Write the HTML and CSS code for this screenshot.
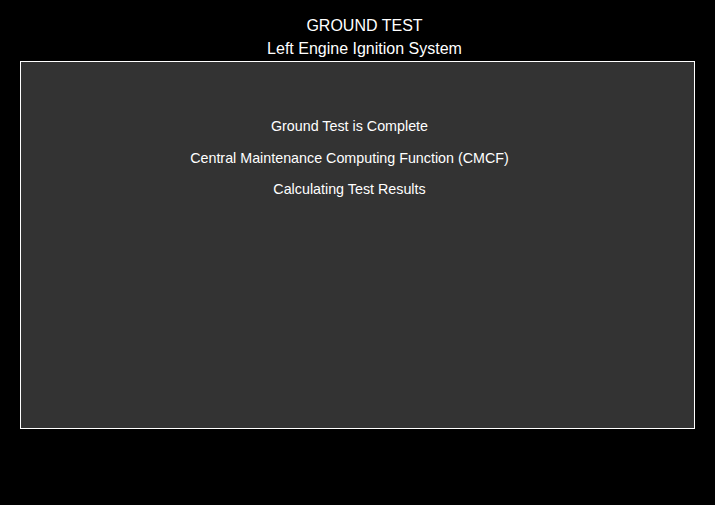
FILE: index.html
```html
<!DOCTYPE html>
<html>
<head>
<meta charset="utf-8">
<link rel="stylesheet" href="styles.css">
</head>
<body>
<div class="header">
  <div class="title">GROUND TEST</div>
  <div class="subtitle">Left Engine Ignition System</div>
</div>
<div class="panel">
  <div class="messages">
    <div class="msg">Ground Test is Complete</div>
    <div class="msg">Central Maintenance Computing Function (CMCF)</div>
    <div class="msg">Calculating Test Results</div>
  </div>
</div>
</body>
</html>
```
FILE: styles.css
```css
html, body {
  margin: 0;
  padding: 0;
  background: #000;
  color: #fff;
  font-family: "Liberation Sans", Arial, sans-serif;
}
body {
  width: 715px;
  height: 505px;
  overflow: hidden;
}
.header {
  box-sizing: border-box;
  padding-top: 14px;
  padding-left: 14px;
  text-align: center;
  font-size: 16px;
  line-height: 23px;
  height: 61px;
}
.panel {
  margin-left: 20px;
  width: 673px;
  height: 366px;
  border: 1px solid #fff;
  background: #333333;
}
.messages {
  padding-top: 49px;
  padding-right: 16px;
  text-align: center;
  font-size: 14.3px;
  line-height: 31.5px;
}
```
